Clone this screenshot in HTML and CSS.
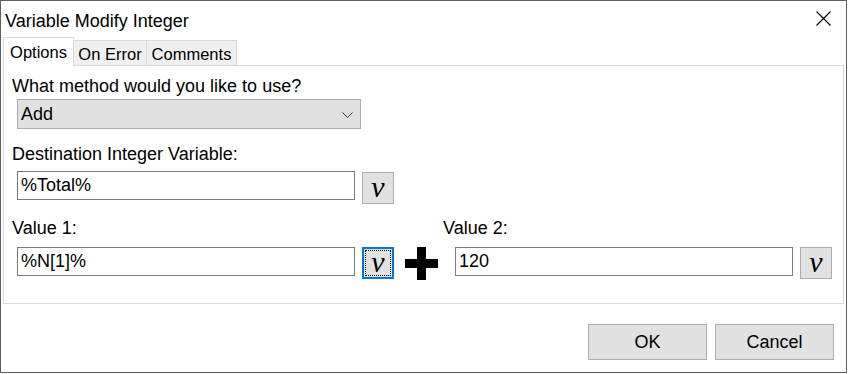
FILE: index.html
```
<!DOCTYPE html>
<html>
<head>
<meta charset="utf-8">
<title>Variable Modify Integer</title>
<link rel="stylesheet" href="styles.css">
</head>
<body>
<div class="window">
  <div class="titlebar">
    <span class="title">Variable Modify Integer</span>
    <svg class="close" width="15" height="15" viewBox="0 0 15 15"><path d="M0.5 0.5 L14.5 14.5 M14.5 0.5 L0.5 14.5" stroke="#000" stroke-width="1.1" fill="none"/></svg>
  </div>
  <div class="tabs">
    <div class="tab tab-active tab-options">Options</div>
    <div class="tab tab-error">On Error</div>
    <div class="tab tab-comments">Comments</div>
  </div>
  <div class="panel">
    <div class="label">What method would you like to use?</div>
    <div class="combo">
      <span>Add</span>
      <svg class="chev" width="11" height="6" viewBox="0 0 11 6"><path d="M0.5 0.5 L5.5 5.5 L10.5 0.5" stroke="#333" stroke-width="1" fill="none"/></svg>
    </div>
    <div class="label label-dest">Destination Integer Variable:</div>
    <div class="field-row field-row-dest">
      <div class="input">%Total%</div>
      <div class="vbtn"><span>v</span></div>
    </div>
    <div class="value-row">
      <div class="group group1">
        <div class="label">Value 1:</div>
        <div class="field-row">
          <div class="input">%N[1]%</div>
          <div class="vbtn vbtn-focus"><span>v</span></div>
        </div>
      </div>
      <svg class="plus" width="33" height="33" viewBox="0 0 33 33"><rect x="0" y="12" width="33" height="9" fill="#000"/><rect x="12" y="0" width="9" height="33" fill="#000"/></svg>
      <div class="group group2">
        <div class="label">Value 2:</div>
        <div class="field-row field-row-2">
          <div class="input">120</div>
          <div class="vbtn"><span>v</span></div>
        </div>
      </div>
    </div>
  </div>
  <div class="footer">
    <div class="btn">OK</div>
    <div class="btn">Cancel</div>
  </div>
</div>
</body>
</html>
```
FILE: styles.css
```
* { box-sizing: border-box; }
html, body { margin: 0; padding: 0; background: #ffffff; }
body {
  font-family: "Liberation Sans", Arial, sans-serif;
  font-size: 18px;
  color: #000;
}
.window {
  width: 847px;
  height: 373px;
  border: 1px solid #5e5e5e;
  background: #fff;
  display: flex;
  flex-direction: column;
}
.titlebar {
  height: 36px;
  display: flex;
  justify-content: space-between;
  align-items: flex-start;
  padding: 10px 15px 0 4px;
}
.title {
  font-size: 18px;
  line-height: 20px;
}
.close { display: block; margin-top: 0; }
.tabs {
  height: 28px;
  display: flex;
  align-items: flex-start;
  padding-left: 2px;
}
.tab {
  font-size: 16.5px;
  line-height: 20px;
  height: 25px;
  margin-top: 3px;
  text-align: center;
  background: #f0f0f0;
  border: 1px solid #d9d9d9;
  border-bottom: none;
  border-left: none;
  padding-top: 3px;
}
.tab-active {
  position: relative;
  z-index: 1;
  height: 29px;
  margin-top: 0;
  background: #fff;
  border-left: 1px solid #d9d9d9;
  padding-top: 4px;
  width: 71px;
}
.tab-error { width: 73px; }
.tab-comments { width: 90px; }
.panel {
  height: 239px;
  margin: 0 2px;
  border: 1px solid #d9d9d9;
  padding: 10px 8px 0 8px;
}
.label {
  line-height: 20px;
  white-space: nowrap;
}
.combo {
  margin: 3px 0 0 5px;
  width: 344px;
  height: 30px;
  background: #e1e1e1;
  border: 1px solid #adadad;
  display: flex;
  align-items: center;
  justify-content: space-between;
  padding: 0 7px 0 3px;
  line-height: 20px;
}
.chev { display: block; margin-top: 1px; }
.label-dest { margin-top: 15px; }
.field-row {
  display: flex;
  align-items: flex-start;
  gap: 7px;
  margin-left: 5px;
  margin-top: 9px;
}
.field-row-dest { margin-top: 7px; }
.field-row-dest .vbtn { margin-top: 1px; }
.field-row-2 { margin-left: 12px; }
.input {
  width: 338px;
  height: 29px;
  border: 1px solid #7a7a7a;
  padding: 0 3px;
  line-height: 26px;
  background: #fff;
}
.vbtn {
  width: 32px;
  height: 32px;
  background: #e1e1e1;
  border: 1px solid #adadad;
  display: flex;
  align-items: center;
  justify-content: center;
  font-family: "Liberation Serif", "Times New Roman", serif;
  font-style: italic;
  font-size: 30px;
  line-height: 24px;
  position: relative;
}
.vbtn span { display: block; margin-top: -2px; }
.vbtn-focus {
  border: 2px solid #0078d7;
}
.vbtn-focus::after {
  content: "";
  position: absolute;
  left: 1px;
  top: 1px;
  right: 1px;
  bottom: 1px;
  border: 1px dotted #000;
}
.value-row {
  display: flex;
  align-items: flex-end;
  margin-top: 14px;
}
.group { display: flex; flex-direction: column; }
.plus {
  display: block;
  margin: 0 5px -1px 11px;
}
.footer {
  display: flex;
  justify-content: flex-end;
  gap: 8px;
  padding: 20px 12px 0 0;
}
.btn {
  width: 119px;
  height: 36px;
  background: #e1e1e1;
  border: 1px solid #adadad;
  display: flex;
  align-items: center;
  justify-content: center;
  line-height: 20px;
}
```
